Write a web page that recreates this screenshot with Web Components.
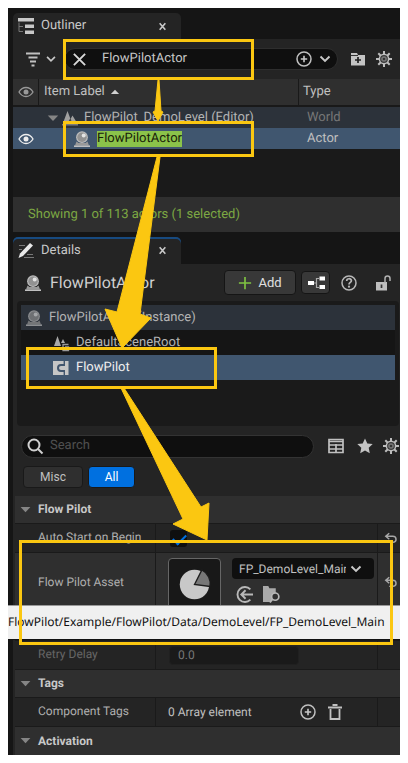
<!DOCTYPE html>
<html lang="en">
<head>
<meta charset="utf-8">
<title>Outliner and Details</title>
<style>
body{margin:8px;background:#fff;font-family:Roboto,"Noto Sans",sans-serif;font-size:13px;line-height:16px;color:#c0c0c0;text-rendering:geometricPrecision}
</style>
</head>
<body>
<editor-window></editor-window>
<script>
const ICONS = {
  outliner:'<path d="M5 0h11v3.500H5zM7 6.500h9V10H7zM7 12.500h9V16H7z" fill="#c8c8c8"/><path d="M1 4.500v9M1 8.500h4M1 13.500h4" stroke="#777" fill="none"/><path d="M0 0h5v3.500H0z" fill="#c8c8c8"/>',
  close:'<path d="M4.500 4l7 8M11.500 4l-7 8" stroke="#c8c8c8" stroke-width="2"/>',
  clear:'<path d="M2 2l12 12M14 2L2 14" stroke="#d8d8d8" stroke-width="2"/>',
  filter:'<path d="M1 2.500h14M3.500 6.500h9M5 10.500h6M6.500 14.500h3" stroke="#c0c0c0" stroke-width="1.800"/>',
  chevron:'<path d="M3.500 5.500L8 10l4.500-4.500" fill="none" stroke="#c8c8c8" stroke-width="1.900"/>',
  plusCircle:'<circle cx="8" cy="8" r="7" fill="none" stroke="#c0c0c0" stroke-width="1.500"/><path d="M8 4.800v6.400M4.800 8h6.400" stroke="#c8c8c8" stroke-width="1.600"/>',
  folderPlus:'<path d="M1 2h6l1 2h7v10.500H1z" fill="#c4c4c4"/><path d="M1 4.500h7" stroke="#333"/><path d="M8 6v6M5 9h6" stroke="#222" stroke-width="1.700"/>',
  gear:'<g stroke="#bcbcbc" stroke-width="2"><path d="M8 0v16M0 8h16M2.300 2.300l11.400 11.400M13.700 2.300L2.300 13.700"/></g><circle cx="8" cy="8" r="5.400" fill="#bcbcbc"/><circle cx="8" cy="8" r="3.900" fill="#383838"/><circle cx="8" cy="8" r="2.800" fill="#777"/><circle cx="8" cy="8" r="1.300" fill="#333"/>',
  eye:'<path d="M1 8c3.500-6 10.500-6 14 0-3.500 6-10.500 6-14 0z" fill="none" stroke="currentColor" stroke-width="1.300"/><circle cx="8" cy="8" r="2.500" fill="currentColor"/>',
  sortUp:'<path d="M2.500 10.500L8 5l5.500 5.500z" fill="#d0d0d0"/>',
  down:'<path d="M2 5h12l-6 6.500z" fill="#858585"/>',
  level:'<path d="M1 13L5.500 1l3 8 2-3.500L15 13z" fill="#a0a0a0"/><path d="M5.500 13L8.500 8l1.500 5z" fill="#444"/><path d="M0 14.800h16" stroke="#888" stroke-width="1.300"/>',
  actor:'<circle cx="8" cy="6.200" r="5.900" fill="#bcbcbc"/><circle cx="8" cy="6.200" r="4.700" fill="#929292"/><circle cx="9.700" cy="4.500" r="2" fill="#e4e4e4"/><path d="M2.500 10.500L1 14.500h14l-1.500-4-2 1.500h-7z" fill="#999"/><path d="M0 15.200h16" stroke="#c0c0c0" stroke-width="1.600"/>',
  pencil:'<path d="M1 2.500h6M1 6.500h3M9 11.500h6M6 14.500h10" stroke="#777" stroke-width="1.200"/><path d="M12 0l3 2.500L5 13l-4.500 2L2 10.500z" fill="#e8e8e8"/>',
  plus:'<path d="M8 1v14M1 8h14" stroke="#7fc241" stroke-width="1.900"/>',
  nodes:'<path d="M0 6h6v4H0zM11.500 1.500H17v4h-5.500zM11.500 10H17v4h-5.500z" fill="#fff"/><path d="M11 3.500H8.500v9H11M6 8h2.500" fill="none" stroke="#aaa" stroke-width="1.200"/>',
  help:'<circle cx="8" cy="8" r="7" fill="none" stroke="#b8b8b8" stroke-width="1.500"/><path d="M5.700 6c0-3 4.700-3 4.700-.2C10.400 7.600 8 7.300 8 9.600" fill="none" stroke="#b8b8b8" stroke-width="1.700"/><circle cx="8" cy="11.700" r="1.100" fill="#b8b8b8"/>',
  unlock:'<path d="M1 7h11v8.500H1z" fill="#bebebe"/><path d="M10 8V3.500c0-3.300 5-3.300 5 0V6" stroke="#b0b0b0" stroke-width="1.500" fill="none"/><path d="M6.500 9.500v3.500" stroke="#333" stroke-width="1.700"/>',
  scene:'<path d="M1 11L4.500 1 8 11zM8 8l2-4 2 4z" fill="#a8a8a8"/><path d="M0 13h9" stroke="#888" stroke-width="1.400"/><path d="M9.500 9.500h6M10 9v6.500h5.500V12H12" fill="none" stroke="#999" stroke-width="1.300"/>',
  flow:'<path d="M0 1h15.500v14H0z" fill="#c6c6c6"/><path d="M11.300 5H8a3 3 0 0 0 0 6h3.300" fill="none" stroke="#42566e" stroke-width="2"/><path d="M11.300 1v5M11.300 10v5" stroke="#42566e" stroke-width="1.400"/>',
  search:'<circle cx="7" cy="7" r="5.500" fill="none" stroke="#d0d0d0" stroke-width="2"/><path d="M11 11l4.500 4.500" stroke="#d0d0d0" stroke-width="2"/>',
  grid:'<path d="M1 1.500h14v13H1zM1 3.500h14M1 7h14M1 11h14M8 6v8.500" fill="none" stroke="#c0c0c0" stroke-width="1.700"/>',
  star:'<path d="M8 .5l2.300 5 5.400.6-4 3.700 1.100 5.500L8 12.600l-4.800 2.700 1.100-5.500-4-3.700 5.400-.6z" fill="#c4c4c4"/>',
  undo:'<path d="M2 6h8c5 0 5 7 0 7H6M6 2.500L2 6l4 3.500" fill="none" stroke="#a8a8a8" stroke-width="1.700"/>',
  useAsset:'<path d="M13.500 3.200a7 7 0 1 0 0 9.600M16 8H5M9 4L5 8l4 4" fill="none" stroke="#b8b8b8" stroke-width="1.800"/>',
  browse:'<path d="M0 0h5l1 2h6v6l-5 7H0z" fill="#aaa"/><circle cx="11.500" cy="10" r="3.400" fill="#303030" stroke="#b8b8b8" stroke-width="1.600"/><path d="M9 12.500L6.500 15.500" stroke="#b8b8b8" stroke-width="1.700"/>',
  trash:'<path d="M1 3.500h14M5.500 1h5M3.500 5v10h9V5" fill="none" stroke="#c0c0c0" stroke-width="1.800"/>',
  pie:'<circle cx="8" cy="8" r="7.600" fill="#c8c8c8"/><path d="M8 8L11.800.5A7.900 7.900 0 0 1 16 9z" fill="#777" stroke="#1c1c1c" stroke-width=".7"/>'
};

const BASE = `*{box-sizing:border-box}
button{font:inherit;color:inherit;background:none;border:0;padding:0;margin:0;display:flex;align-items:center;justify-content:center}
input,select{font:inherit;margin:0;text-rendering:inherit}`;

function define(name, css, html) {
  const template = document.createElement('template');
  template.innerHTML = `<style>${BASE}${css}</style>${html}`;
  customElements.define(name, class extends HTMLElement {
    constructor() {
      super();
      this.attachShadow({mode: 'open'}).append(template.content.cloneNode(true));
    }
  });
}

customElements.define('ue-icon', class extends HTMLElement {
  connectedCallback() {
    const root = this.shadowRoot || this.attachShadow({mode: 'open'});
    root.innerHTML = `<style>:host{display:block;flex:none;width:var(--icon,16px);height:var(--icon,16px)}svg{display:block;width:100%;height:100%;overflow:visible}</style>
      <svg viewBox="0 0 16 16" aria-hidden="true">${ICONS[this.getAttribute('name')]}</svg>`;
  }
});

define('ue-tab', `
:host{box-sizing:border-box;display:flex;align-items:center;width:168px;height:26px;padding:0 12px 0 5px;background:#242424;border-radius:5px 5px 0 0;color:#c8c8c8}
:host([active]){height:27px;box-shadow:inset 0 2px #174a80}
.title{flex:1;margin-left:7px}
button ue-icon{--icon:13px}`,
`<slot name="icon"></slot><span class="title"><slot></slot></span><button aria-label="Close tab"><ue-icon name="close"></ue-icon></button>`);

define('outliner-toolbar', `
:host{box-sizing:border-box;display:flex;align-items:center;height:40px;padding:0 8px 0 12px;background:#242424}
.filter{gap:3px}
.filter ue-icon+ue-icon{--icon:14px}
.search{flex:1;display:flex;align-items:center;height:22px;margin:0 12px 0 6px;padding:0 4px 0 7px;background:#0f0f0f;border:1px solid #2e2e2e;border-radius:11px;min-width:0}
input{flex:1;min-width:0;width:0;margin-left:15px;padding:0;border:0;background:none;color:#c8c8c8;outline:0}
.search button+button{margin-left:5px}
.tool{margin-right:10px}
.clear ue-icon{--icon:15px}`,
`<button class="filter" aria-label="Filters"><ue-icon name="filter"></ue-icon><ue-icon name="chevron"></ue-icon></button>
<div class="search"><button class="clear" aria-label="Clear search"><ue-icon name="clear"></ue-icon></button><input aria-label="Search actors" value="FlowPilotActor"><button aria-label="Save filter"><ue-icon name="plusCircle"></ue-icon></button><button aria-label="Filter options"><ue-icon name="chevron"></ue-icon></button></div>
<button class="tool" aria-label="Create folder"><ue-icon name="folderPlus"></ue-icon></button><button aria-label="Settings"><ue-icon name="gear"></ue-icon></button>`);

define('outliner-table', `
:host{display:block;height:118px;background:#1a1a1a}
table{width:100%;border-collapse:separate;border-spacing:0;table-layout:fixed}
td,th{padding:0;font-weight:400;text-align:left;white-space:nowrap}
th{height:28px;background:#2f2f2f;border-bottom:2px solid #191919}
th+th{border-left:1px solid #191919}
td{height:21px}
.eye{width:25px;padding-left:5px;color:#999}
.type{width:102px}
th.type{padding-left:4px}
td.type{padding-left:9px}
.label{padding-left:5px}
.cell{display:flex;align-items:center}
tr.world{background:#2c323a;color:#b4b4b4}
.world .type{color:#777}
tr.actor{background:#40566f}
.actor .eye{color:#eee}
.world .cell{padding-left:3px;gap:2px}
.world .cell span{margin-left:4px}
.world .cell ue-icon:first-child{--icon:14px}
.actor .cell{padding-left:31px;gap:7px}
mark{background:#8bc34a;color:#172008;line-height:16px}
th .cell{gap:4px}
th.label ue-icon{--icon:12px}`,
`<table><thead><tr><th class="eye"><ue-icon name="eye"></ue-icon></th><th class="label"><div class="cell">Item Label <ue-icon name="sortUp"></ue-icon></div></th><th class="type">Type</th></tr></thead>
<tbody><tr class="world"><td></td><td class="label"><div class="cell"><ue-icon name="down"></ue-icon><ue-icon name="level"></ue-icon><span>FlowPilot_DemoLevel (Editor)</span></div></td><td class="type">World</td></tr>
<tr class="actor"><td class="eye"><ue-icon name="eye"></ue-icon></td><td class="label"><div class="cell"><ue-icon name="actor"></ue-icon><mark>FlowPilotActor</mark></div></td><td class="type">Actor</td></tr></tbody></table>`);

define('outliner-panel', `
:host{display:block}
.status{height:35px;padding:10px 15px 0;background:#2f2f2f;color:#7da843}`,
`<ue-tab><ue-icon slot="icon" name="outliner"></ue-icon>Outliner</ue-tab>
<outliner-toolbar></outliner-toolbar><outliner-table></outliner-table>
<div class="status">Showing 1 of 113 actors (1 selected)</div>`);

define('actor-header', `
:host{box-sizing:border-box;display:flex;align-items:center;height:37px;padding:0 9px 0 12px}
h2{flex:1;margin:0 0 0 9px;font-size:16px;font-weight:400;line-height:20px;color:#d0d0d0}
.box{height:25px;background:#383838;border:1px solid #151515;border-radius:4px}
.add{width:72px;gap:6px;color:#e0e0e0;--icon:14px}
.tree{width:29px;height:23px;margin:0 11px 0 5px}
.lock{margin-left:18px}`,
`<ue-icon name="actor"></ue-icon><h2>FlowPilotActor</h2><button class="box add"><ue-icon name="plus"></ue-icon>Add</button><button class="box tree" aria-label="Component tree"><ue-icon name="nodes"></ue-icon></button><button aria-label="Help"><ue-icon name="help"></ue-icon></button><button class="lock" aria-label="Unlock"><ue-icon name="unlock"></ue-icon></button>`);

define('component-row', `
:host{box-sizing:border-box;display:flex;align-items:center;gap:7px;height:25px;padding-left:5px;background:#151515;color:#b4b4b4}
:host([kind=root]){background:#2c323a}
:host([kind=child]),:host([kind=selected]){padding-left:32px}
:host([kind=selected]){background:#40566f;color:#f0f0f0}`,
`<slot name="icon"></slot><span><slot></slot></span>`);

define('component-tree', `
:host{box-sizing:border-box;display:block;height:125px;margin:0 1px 0 4px;padding:4px;background:#1a1a1a;border-radius:4px}`,
`<component-row kind="root"><ue-icon slot="icon" name="actor" style="opacity:.65"></ue-icon>FlowPilotActor (Instance)</component-row>
<component-row kind="child"><ue-icon slot="icon" name="scene"></ue-icon>DefaultSceneRoot</component-row>
<component-row kind="selected"><ue-icon slot="icon" name="flow"></ue-icon>FlowPilot</component-row>`);

define('details-search', `
:host{display:flex;align-items:center;height:22px;margin:9px 1px 9px 8px}
.search{flex:1;display:flex;align-items:center;height:23px;margin-right:14px;padding-left:5px;background:#0f0f0f;border:1px solid #333;border-radius:12px;min-width:0}
input{flex:1;min-width:0;padding:0;border:0;margin-left:7px;background:none;outline:0}
input::placeholder{color:#505050;opacity:1}
button+button{margin-left:13px}
button:last-child{margin-left:10px}`,
`<div class="search"><ue-icon name="search"></ue-icon><input aria-label="Search details" placeholder="Search"></div><button aria-label="Property matrix"><ue-icon name="grid"></ue-icon></button><button aria-label="Favorites"><ue-icon name="star"></ue-icon></button><button aria-label="View options"><ue-icon name="gear"></ue-icon></button>`);

define('filter-bar', `
:host{display:flex;gap:5px;height:30px;margin-left:10px;font-size:12px}
button{width:60px;height:22px;background:#2f2f2f;border:1px solid #191919;border-radius:4px}
.on{width:47px;background:#0070e0;color:#fff}`,
`<button>Misc</button><button class="on" aria-pressed="true">All</button>`);

define('detail-category', `
:host{box-sizing:border-box;display:flex;align-items:center;gap:8px;height:28px;margin-left:2px;padding:0 0 1px 4px;background:#2f2f2f;border-bottom:1px solid #1a1a1a;--icon:13px}
:host([last]){border-bottom:0}
h3{margin:0;font-size:12px;line-height:16px;font-weight:700;color:#c8c8c8}
ue-icon{margin-right:-2px}`,
`<ue-icon name="down"></ue-icon><h3><slot></slot></h3>`);

define('detail-row', `
:host{box-sizing:border-box;display:grid;grid-template-columns:140px 1fr 23px;height:29px;margin-left:2px;background:#242424;border-bottom:1px solid #1a1a1a;font-size:12px}
:host([tall]){height:88px;background:#2f2f2f}
:host([disabled]) .name{color:#666}
.name{padding:5px 0 0 23px;white-space:nowrap;overflow:hidden;color:#b0b0b0}
:host([tall]) .name{padding-top:21px}
.value{display:flex;align-items:center;padding-left:12px;border-left:1px solid #1a1a1a;min-width:0}
:host([tall]) .value{align-items:flex-start;padding-top:5px}
.reset{padding:7px 0 0 6px;border-left:1px solid #1a1a1a;--icon:14px}
:host([tall]) .reset{padding-top:22px}`,
`<div class="name"><slot name="name"></slot></div><div class="value"><slot></slot></div><div class="reset"><slot name="reset"></slot></div>`);

define('reset-button', `:host{display:block}`, `<button aria-label="Reset to default"><ue-icon name="undo"></ue-icon></button>`);

define('check-field', `
:host{display:block}
input{appearance:none;display:block;width:17px;height:17px;margin-left:2px;background:#0f0f0f;border-radius:3px}
input::after{content:"";display:block;width:11px;height:6px;border:solid #0070e0;border-width:0 0 2px 2px;transform:translate(3px,4px) rotate(-45deg)}`,
`<input type="checkbox" checked aria-label="Auto Start on Begin">`);

define('number-field', `
:host{display:block}
input{display:block;width:130px;height:19px;margin-left:1px;padding:0 8px;background:#1a1a1a;border:1px solid #202020;border-radius:4px;color:#777}`,
`<input value="0.0" disabled aria-label="Retry Delay">`);

define('array-field', `
:host{display:flex;align-items:center;color:#c0c0c0}
.count{width:132px}
.bin{margin-left:11px}`,
`<span class="count">0 Array element</span><button aria-label="Add element"><ue-icon name="plusCircle"></ue-icon></button><button class="bin" aria-label="Remove all"><ue-icon name="trash"></ue-icon></button>`);

define('asset-field', `
:host{display:flex;gap:11px;min-width:0;width:100%}
.thumb{flex:none;width:53px;height:64px;padding-top:10px;display:flex;justify-content:center;background:#181818;border:1px solid #666;border-radius:4px;--icon:31px}
.pick{position:relative;width:142px;height:21px;color:#c0c0c0;--icon:16px}
select{appearance:none;width:100%;height:100%;padding:0 28px 0 7px;background:#0f0f0f;border:0;border-radius:4px;color:inherit;text-overflow:clip}
.pick ue-icon{position:absolute;right:10px;top:3px;pointer-events:none}
.acts{display:flex;gap:10px;margin:7px 0 0 4px;--icon:17px}`,
`<div class="thumb"><ue-icon name="pie"></ue-icon></div><div><div class="pick"><select aria-label="Flow Pilot Asset"><option>FP_DemoLevel_Main</option></select><ue-icon name="chevron"></ue-icon></div>
<div class="acts"><button aria-label="Use selected asset"><ue-icon name="useAsset"></ue-icon></button><button aria-label="Browse to asset"><ue-icon name="browse"></ue-icon></button></div></div>`);

define('details-panel', `
:host{display:block;margin-top:5px}
.body{background:#242424}`,
`<ue-tab active><ue-icon slot="icon" name="pencil"></ue-icon>Details</ue-tab>
<div class="body"><actor-header></actor-header><component-tree></component-tree><details-search></details-search><filter-bar></filter-bar>
<detail-category>Flow Pilot</detail-category>
<detail-row><span slot="name">Auto Start on Begin</span><check-field></check-field><reset-button slot="reset"></reset-button></detail-row>
<detail-row tall><span slot="name">Flow Pilot Asset</span><asset-field></asset-field><reset-button slot="reset"></reset-button></detail-row>
<detail-row disabled><span slot="name">Retry Delay</span><number-field></number-field></detail-row>
<detail-category>Tags</detail-category>
<detail-row><span slot="name">Component Tags</span><array-field></array-field></detail-row>
<detail-category last>Activation</detail-category></div>`);

define('path-tooltip', `
:host{box-sizing:border-box;position:absolute;left:0;right:0;top:597px;height:35px;padding-top:8px;background:#f0f0f0;border-top:1px solid #999;border-bottom:1px solid #111;color:#111;font-family:"Noto Sans",Roboto,sans-serif;font-size:12px;white-space:nowrap;overflow:hidden}`,
`<slot></slot>`);

define('guide-arrows', `
:host{position:absolute;left:0;top:0;pointer-events:none}
svg{display:block}`,
`<svg width="392" height="747" viewBox="8 8 392 747" aria-hidden="true">
<g fill="none" stroke="#fbc711" stroke-width="3"><path d="M64.500 40.500h188v38h-188zM64.500 122.500h188v33h-188zM27.500 348.500h188v39h-188zM20.500 541.500h371v102h-371z"/></g>
<g fill="#fbc711" stroke="#fbc711" stroke-linejoin="round"><path d="M158 80l1 0 2 31 2 1-5 9-5-9 2-1z"/>
<path d="M157 157h3L140 314l11 4-29 30-17-39 12 3z"/>
<path d="M121 388h3l77 119 8-4-2 37-34-16 10-5z"/></g></svg>`);

define('editor-window', `
:host{display:block;position:relative;overflow:hidden;padding:5px 0 0 5px;background:#151515}`,
`<outliner-panel></outliner-panel><details-panel></details-panel>
<path-tooltip role="tooltip">FlowPilot/Example/FlowPilot/Data/DemoLevel/FP_DemoLevel_Main</path-tooltip><guide-arrows></guide-arrows>`);
</script>
</body>
</html>
